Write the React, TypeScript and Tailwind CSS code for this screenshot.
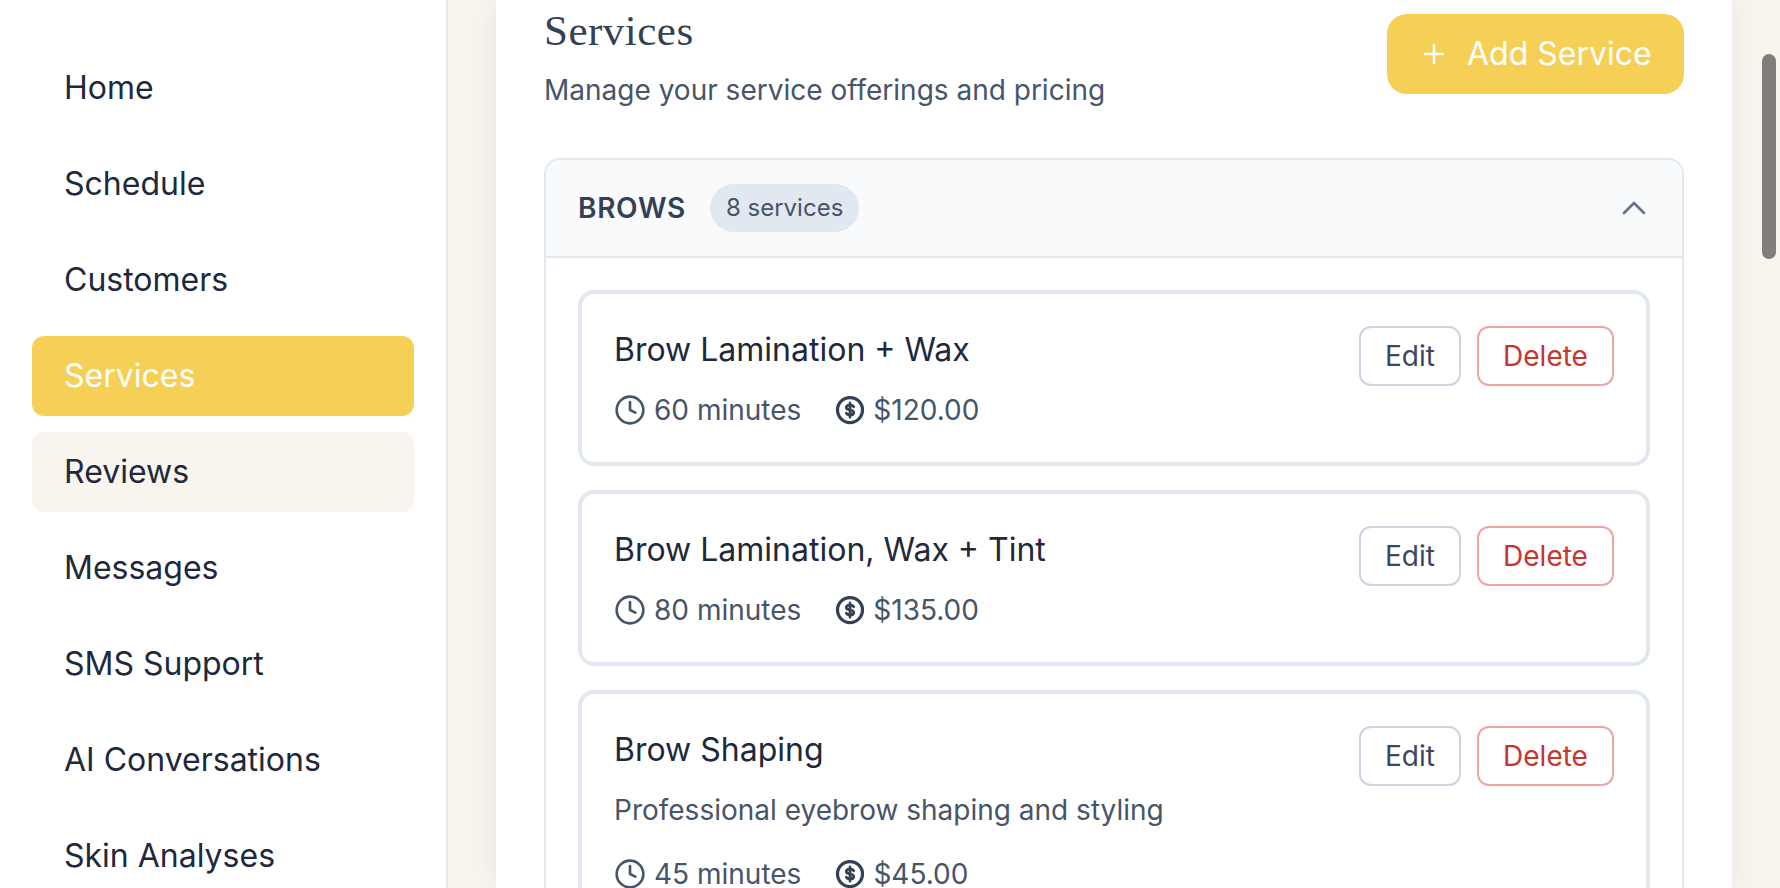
import React from "react";
import { ChevronUp, Clock, Plus } from "lucide-react";

interface Service {
  name: string;
  description?: string;
  minutes: number;
  price: string;
}

const navItems = [
  "Home",
  "Schedule",
  "Customers",
  "Services",
  "Reviews",
  "Messages",
  "SMS Support",
  "AI Conversations",
  "Skin Analyses",
];

const services: Service[] = [
  { name: "Brow Lamination + Wax", minutes: 60, price: "$120.00" },
  { name: "Brow Lamination, Wax + Tint", minutes: 80, price: "$135.00" },
  {
    name: "Brow Shaping",
    description: "Professional eyebrow shaping and styling",
    minutes: 45,
    price: "$45.00",
  },
];

// ring with a short, heavy dollar sign
const DollarIcon = () => (
  <svg width="30" height="30" viewBox="0 0 24 24" fill="none" stroke="currentColor" strokeLinecap="round" strokeLinejoin="round" className="ml-[2px] shrink-0 text-[#334155]">
    <circle cx="12" cy="12" r="10" strokeWidth="2.6" />
    <path d="M15 9.4c-.5-.9-1.6-1.4-3-1.4-1.7 0-3 .8-3 2s1.300 1.700 3 2 3 .8 3 2-1.300 2-3 2c-1.400 0-2.500-.5-3-1.400M12 6.300v11.400" strokeWidth="2.2" />
  </svg>
);

const NavItem: React.FC<{ label: string }> = ({ label }) => {
  const active = label === "Services";
  const hovered = label === "Reviews";
  return (
    <a
      className={`flex h-[80px] shrink-0 items-center rounded-[12px] px-8 text-[32px] ${
        active ? "bg-[#f6cf57] text-white" : hovered ? "bg-[#f8f5ee] text-[#1e293b]" : "text-[#1e293b]"
      }`}
    >
      {label}
    </a>
  );
};

const ServiceCard: React.FC<{ service: Service }> = ({ service }) => (
  <div className="flex shrink-0 items-start justify-between rounded-[16px] border-4 border-[#e2e8f0] bg-white p-8">
    <div>
      <h3 className="text-[32px] leading-[48px] text-[#1e293b]">{service.name}</h3>
      {service.description && (
        <p className="mt-4 mb-6 text-[28px] leading-[40px] text-[#475569]">{service.description}</p>
      )}
      <div className={`flex items-center gap-8 text-[28px] leading-[40px] text-[#475569] ${service.description ? "" : "mt-4"}`}>
        <span className="flex items-center gap-2">
          <Clock size={32} strokeWidth={2} className="text-[#475569]" />
          {service.minutes} minutes
        </span>
        <span className="flex items-center gap-2">
          <DollarIcon />
          {service.price}
        </span>
      </div>
    </div>
    <div className="flex gap-4">
      <button className="h-[60px] w-[102px] rounded-[12px] border-2 border-[#cbd5e1] text-[28px] text-[#3a475c]">
        Edit
      </button>
      <button className="h-[60px] w-[137px] rounded-[12px] border-2 border-[#f0a3a3] text-[28px] text-[#c9352b]">
        Delete
      </button>
    </div>
  </div>
);

export default function App() {
  return (
    <div className="flex h-screen overflow-hidden bg-[#f8f5ef] font-['Inter',sans-serif]">
      <aside className="flex w-[448px] shrink-0 flex-col gap-4 overflow-hidden border-r-2 border-[#e8e8ec] bg-white px-8 pt-12">
        {navItems.map((item) => (
          <NavItem key={item} label={item} />
        ))}
      </aside>

      <main className="relative min-w-0 flex-1 px-12">
        <div className="h-full overflow-hidden bg-white px-12 shadow-[0_0_30px_rgba(0,0,0,0.07)]">
          <header className="flex items-start justify-between pt-[14px]">
            <div>
              <h1 className="font-['Liberation_Serif',serif] text-[43px] leading-[34px] tracking-[0.5px] text-[#334155]">
                Services
              </h1>
              <p className="mt-[22px] text-[28px] leading-[40px] text-[#475569]">
                Manage your service offerings and pricing
              </p>
            </div>
            <button className="flex h-[80px] w-[297px] items-center gap-[18px] rounded-[20px] bg-[#f6cf57] px-8 text-[32px] text-white">
              <Plus size={30} strokeWidth={2} className="shrink-0" />
              Add Service
            </button>
          </header>

          <section className="mt-[48px] rounded-t-[16px] border-2 border-b-0 border-[#e2e8f0]">
            <div className="flex h-[98px] items-center justify-between rounded-t-[14px] border-b-2 border-[#e2e8f0] bg-[#f8fafc] px-8">
              <div className="flex items-center gap-6">
                <h2 className="text-[28px] font-semibold tracking-[0.7px] text-[#334155]">BROWS</h2>
                <span className="flex h-[48px] items-center rounded-full bg-[#e2e8f0] px-4 text-[24px] text-[#475569]">
                  8 services
                </span>
              </div>
              <ChevronUp size={40} strokeWidth={1.6} className="-mr-1 text-[#64748b]" />
            </div>
            <div className="flex flex-col gap-6 p-8">
              {services.map((service) => (
                <ServiceCard key={service.name} service={service} />
              ))}
            </div>
          </section>
        </div>
        <div className="absolute right-[4px] top-[54px] h-[205px] w-[14px] rounded-full bg-[#7f7e79]" />
      </main>
    </div>
  );
}
